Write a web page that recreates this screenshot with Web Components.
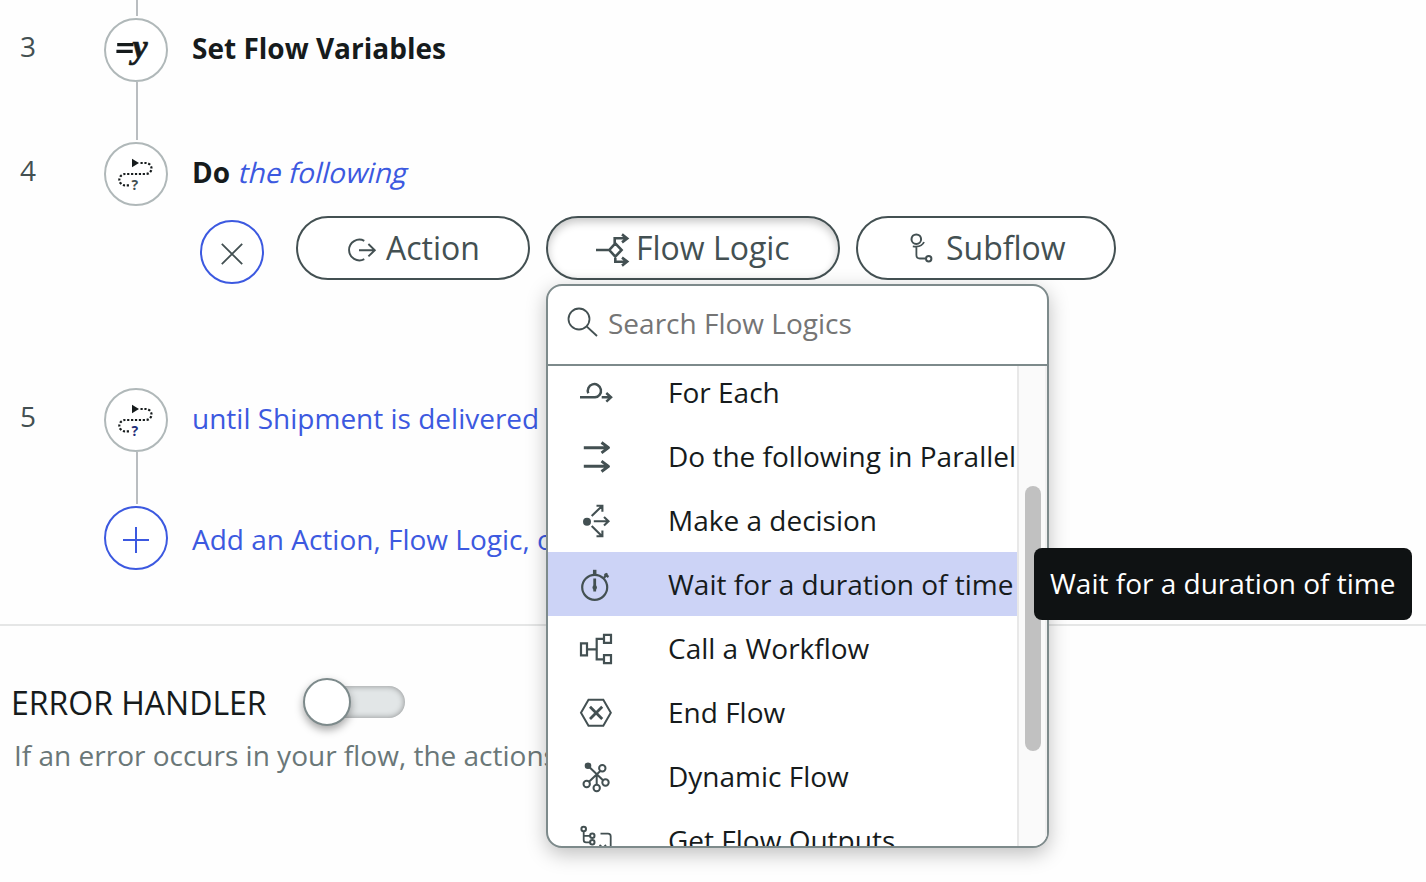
<!DOCTYPE html>
<html lang="en">
<head>
<meta charset="utf-8">
<title>Flow designer</title>
<style>
html,body{margin:0;height:100%;overflow:hidden;background:#fefefe}
body{font-family:"Open Sans",sans-serif;font-size:28px;line-height:38px;color:#161b1c}
</style>
</head>
<body>
<flow-page></flow-page>
<script>
const ICONS = {
  setvar: [64,64,`<path d="M13.200 26.600H29.500M12.400 33.300H28.700" stroke="#161b1c" stroke-width="3.200"/><text x="28.500" y="40" font-family="Liberation Serif,serif" font-style="italic" font-weight="700" font-size="34" fill="#161b1c" style="stroke:#161b1c;stroke-width:.7">y</text>`],
  loop: [64,64,`<path d="M28 16.700v8.600l7-4.300z" fill="#161b1c"/><path d="M36.500 21H42a5.500 5.500 0 0 1 0 11H21a5.500 5.500 0 0 0 0 11.300h5" stroke="#161b1c" stroke-width="2.200" stroke-dasharray="2.200 1.700"/><text x="27.600" y="48" font-family="Open Sans,sans-serif" font-weight="700" font-size="14" fill="var(--mark,#435052)">?</text>`],
  close: [64,64,`<path d="M21.800 23.800l20.400 20.400M42.200 23.800L21.800 44.200" stroke="#435052" stroke-width="1.800"/>`],
  plus: [64,64,`<path d="M19 34h26M32 21v26" stroke="#3c59e0" stroke-width="2"/>`],
  action: [32,32,`<path d="M18.300 6.800A10.400 10.400 0 1 0 18.300 25.200M13 16.200h16M22.400 10l6.400 6.200-6.400 6.200" stroke-width="1.900"/>`],
  logic: [40,36,`<path d="M2 18h13.300M21.300 11.300L27.600 18l-6.300 6.700L15.300 18zM20.700 11.500V6.300H33M28 2.400l5.200 4-5.200 4M21.300 24.700v5H33M28 25.600l5.200 4-5.200 4" stroke-width="2.600"/>`],
  subflow: [32,36,`<circle cx="8.300" cy="7.200" r="4.800"/><path d="M4.800 14.300c5 .8 9.500-.2 11.200-4.300M8.400 14.500V23q0 3.500 3.500 3.500h5.700" stroke-width="1.800"/><circle cx="20.700" cy="26.700" r="2.700"/>`],
  search: [40,40,`<circle cx="15" cy="16" r="10.500" stroke-width="1.800"/><path d="M22.600 23.400L33 33" stroke-width="1.900"/>`],
  foreach: [40,40,`<path d="M4 25.300h15a6.600 6.600 0 1 0-6.700-4M25.700 25.300h9.300M30.300 21l4.700 4.300-4.700 4.300" stroke-width="2.500"/>`],
  parallel: [40,40,`<path d="M7.800 11.700h24.500M25.500 6.500l7 5.200-7 5.200M7.800 30.300h24.500M25.500 25.100l7 5.200-7 5.200" stroke-width="2.900" stroke-linejoin="round"/>`],
  decision: [40,40,`<circle cx="11" cy="21.700" r="4" fill="#435052" stroke="none"/><path d="M15.700 16L26.300 5.700M20.500 5.800h5.900v5.900M17.800 21.300h14.500M28 17l4.500 4.300-4.500 4.300M15.700 26l10.600 10.400M20.500 36.300h5.900v-5.900" stroke-width="2.100"/>`],
  timer: [40,40,`<circle cx="18.700" cy="23.300" r="12.500" stroke-width="2.200"/><path d="M18.700 14.500v13" stroke-width="2.800"/><circle cx="18.700" cy="23.500" r="1.300" fill="#435052"/><path d="M18.700 5.800v5" stroke-width="3.500"/><path d="M28.500 10l4 3M31.200 9.400l-3.200 4.600" stroke-width="2.200"/>`],
  workflow: [40,40,`<path d="M5 15.300h6v12H5zM11 21.300h9.700M28 10.900h-7.300v20.500H28M28 6.800h7v8h-7zM28 27.200h7v8h-7z" stroke-width="2.200"/>`],
  end: [40,40,`<path d="M5 20.700l7.500-13h14.800l7.500 13-7.500 13H12.500z"/><path d="M14 14.800l12.200 12.200M26.200 14.800L14 27" stroke-width="2.800"/>`],
  dynamic: [40,40,`<circle cx="12" cy="9.700" r="2.300" fill="#435052"/><path d="M12 9.700l15.500 15M24.300 15L12.700 26M20.700 18.500v10.300"/><circle cx="26.300" cy="12.300" r="3.200"/><circle cx="29.500" cy="26.500" r="3.200"/><circle cx="20.700" cy="32" r="3.200"/><circle cx="10.700" cy="28" r="3.200"/>`],
  outputs: [40,40,`<circle cx="7.700" cy="9" r="2.300"/><path d="M7.700 11.700V20q0 2.300 2.300 2.300h4M7.700 15.800H14M24.500 13.700h7.500q2.700 0 2.700 2.700V30M23.500 25l2.500 2M30 25l-2 2" stroke-width="1.800"/><circle cx="16.300" cy="15.800" r="2.200"/><circle cx="16.300" cy="22.300" r="2.200"/>`]
};
const define = (name, html) => customElements.define(name, class extends HTMLElement {
  constructor(){ super(); this.attachShadow({mode:"open"}).innerHTML = html; }
});

customElements.define("flow-icon", class extends HTMLElement {
  connectedCallback(){
    const [w,h,body] = ICONS[this.getAttribute("name")];
    const root = this.shadowRoot || this.attachShadow({mode:"open"});
    root.innerHTML = `<style>:host{display:block;flex:none;width:${w}px;height:${h}px}svg{display:block}</style>
    <svg width="${w}" height="${h}" viewBox="0 0 ${w} ${h}" fill="none" stroke="#435052" stroke-width="2"><style>text{stroke:none}path[fill]{stroke:none}</style>${body}</svg>`;
  }
});

customElements.define("flow-node", class extends HTMLElement {
  connectedCallback(){
    const root = this.shadowRoot || this.attachShadow({mode:"open"});
    root.innerHTML = `<style>
    :host{display:block;flex:none;box-sizing:border-box;width:64px;height:64px;border:2px solid #b0b8b9;border-radius:50%;background:#fff}
    :host([tone=blue]){border-color:#3c59e0}
    flow-icon{margin:-2px}</style><flow-icon name="${this.getAttribute("icon")}"></flow-icon>`;
  }
});

customElements.define("flow-step", class extends HTMLElement {
  connectedCallback(){
    const root = this.shadowRoot || this.attachShadow({mode:"open"});
    root.innerHTML = `<style>
    :host{display:grid;grid-template-columns:84px 64px 1fr;padding-left:20px;box-sizing:border-box}
    .num{padding-top:9px;color:#435052}
    .rail{display:flex;flex-direction:column;align-items:center}
    .line{flex:1;width:2px;margin:0 0 2px 2px;background:#b9bdc0}
    .body{padding:11px 0 0 24px;white-space:nowrap}
    :host([icon=plus]) .body{padding-top:14px}
    </style><div class="num">${this.getAttribute("num")||""}</div>
    <div class="rail"><flow-node icon="${this.getAttribute("icon")}" tone="${this.getAttribute("tone")||""}"></flow-node>${this.hasAttribute("line")?'<div class="line"></div>':""}</div>
    <div class="body"><slot></slot></div>`;
  }
});

customElements.define("flow-button", class extends HTMLElement {
  connectedCallback(){
    const root = this.shadowRoot || this.attachShadow({mode:"open"});
    root.innerHTML = `<style>
    :host{display:flex;align-items:center;box-sizing:border-box;height:64px;border:2px solid #435052;border-radius:32px;background:#fff;font-size:32px;line-height:60px;color:#435052;white-space:nowrap;position:relative}
    :host([active]){box-shadow:inset 0 4px 9px rgba(0,0,0,.22)}
    flow-icon{margin-top:4px}
    </style><flow-icon name="${this.getAttribute("icon")}"></flow-icon><slot></slot><slot name="menu"></slot>`;
  }
});

customElements.define("menu-item", class extends HTMLElement {
  connectedCallback(){
    const root = this.shadowRoot || this.attachShadow({mode:"open"});
    root.innerHTML = `<style>
    :host{display:flex;align-items:center;flex:none;height:64px;padding-left:28px;gap:52px;line-height:64px;white-space:nowrap;color:#161b1c}
    :host([selected]){background:#ccd3f6}
    </style><flow-icon name="${this.getAttribute("icon")}"></flow-icon><slot></slot>`;
  }
});

define("hover-tip", `<style>:host{display:block;box-sizing:border-box;height:72px;width:378px;padding:0 16px;line-height:70px;border-radius:8px;background:#0f1213;color:#fff;white-space:nowrap}</style><slot></slot>`);

define("logic-menu", `<style>
:host{display:block;box-sizing:border-box;width:503px;height:564px;font-size:28px;line-height:38px}
.panel{display:flex;flex-direction:column;box-sizing:border-box;height:100%;border:2px solid #7d8a8b;border-radius:16px;background:#fff;overflow:hidden;box-shadow:0 6px 20px rgba(0,0,0,.25)}
.search{display:flex;align-items:center;flex:none;box-sizing:border-box;height:80px;padding:0 0 4px 16px;gap:4px;border-bottom:2px solid #7d8a8b;color:#757575}
.list{display:flex;flex:1;min-height:0}
.items{flex:1;min-width:0;overflow:hidden;display:flex;flex-direction:column}
.items menu-item:first-child{margin-top:-6px}
.bar{box-sizing:border-box;width:30px;border-left:2px solid #e8e8e8;border-right:2px solid #f0f0f0;background:#fafafa;padding:120px 0 0 6px}
.thumb{width:16px;height:265px;border-radius:8px;background:#c1c1c1}
hover-tip{position:absolute;left:488px;top:264px}
</style>
<div class="panel">
<div class="search"><flow-icon name="search"></flow-icon><span>Search Flow Logics</span></div>
<div class="list"><div class="items">
<menu-item icon="foreach">For Each</menu-item>
<menu-item icon="parallel">Do the following in Parallel</menu-item>
<menu-item icon="decision">Make a decision</menu-item>
<menu-item icon="timer" selected>Wait for a duration of time</menu-item>
<menu-item icon="workflow">Call a Workflow</menu-item>
<menu-item icon="end">End Flow</menu-item>
<menu-item icon="dynamic">Dynamic Flow</menu-item>
<menu-item icon="outputs">Get Flow Outputs</menu-item>
</div><div class="bar"><div class="thumb"></div></div></div>
</div>
<hover-tip>Wait for a duration of time</hover-tip>`);

define("toggle-switch", `<style>
:host{display:flex;align-items:center;width:102px;height:48px}
.knob{box-sizing:border-box;flex:none;width:48px;height:48px;border:2px solid #7d8a8b;border-radius:50%;background:#fff;box-shadow:0 4px 8px rgba(0,0,0,.35);z-index:1}
.track{flex:1;height:32px;margin-left:-24px;border-radius:0 16px 16px 0;background:#e2e6e7;box-shadow:inset 0 0 6px rgba(0,0,0,.4)}
</style><div class="knob"></div><div class="track"></div>`);

define("error-handler", `<style>
:host{display:block;border-top:2px solid #e5e6e6;padding:52px 0 0 11px}
.row{display:flex;align-items:center;height:48px}
.title{width:292px;font-size:32px;line-height:44px;padding-top:1px;white-space:nowrap}
p{margin:10px 0 0 3px;color:#6a7778;white-space:nowrap}
</style><div class="row"><div class="title">ERROR HANDLER</div><toggle-switch></toggle-switch></div>
<p>If an error occurs in your flow, the actions</p>`);

define("flow-page", `<style>
:host{display:flex;flex-direction:column;width:1426px;height:882px;overflow:hidden}
.lead{width:2px;height:16px;margin:0 0 2px 136px;background:#b9bdc0;flex:none}
.s3{height:124px}.s4{height:246px;position:relative;z-index:2}.s5{height:118px;--mark:#232f7a}.add{height:118px}
b{font-weight:700}.blue{color:#3c59e0}
.slant{display:inline-block;transform:skewX(-14deg);transform-origin:0 30px}
.controls{display:flex;align-items:flex-start;gap:16px;padding:25px 0 0 8px}
.controls flow-node{margin:4px 16px 0 0}
.a{width:234px;padding-left:48px;gap:8px}
.l{width:294px;padding-left:46px;gap:0}
.l::part(x){}
.u{width:260px;padding-left:50px;gap:6px}
.l{gap:2px}
.a,.l,.u{box-sizing:border-box}
logic-menu{position:absolute;left:-2px;top:66px}
</style>
<div class="lead"></div>
<flow-step class="s3" num="3" icon="setvar" line><b>Set Flow Variables</b></flow-step>
<flow-step class="s4" num="4" icon="loop"><b>Do</b> <span class="blue slant">the following</span>
<div class="controls"><flow-node icon="close" tone="blue"></flow-node>
<flow-button class="a" icon="action">Action</flow-button>
<flow-button class="l" icon="logic" active>Flow Logic<logic-menu slot="menu"></logic-menu></flow-button>
<flow-button class="u" icon="subflow">Subflow</flow-button></div></flow-step>
<flow-step class="s5" num="5" icon="loop" line><span class="blue">until Shipment is delivered</span></flow-step>
<flow-step class="add" icon="plus" tone="blue"><span class="blue">Add an Action, Flow Logic, or</span></flow-step>
<error-handler></error-handler>`);
</script>
</body>
</html>
